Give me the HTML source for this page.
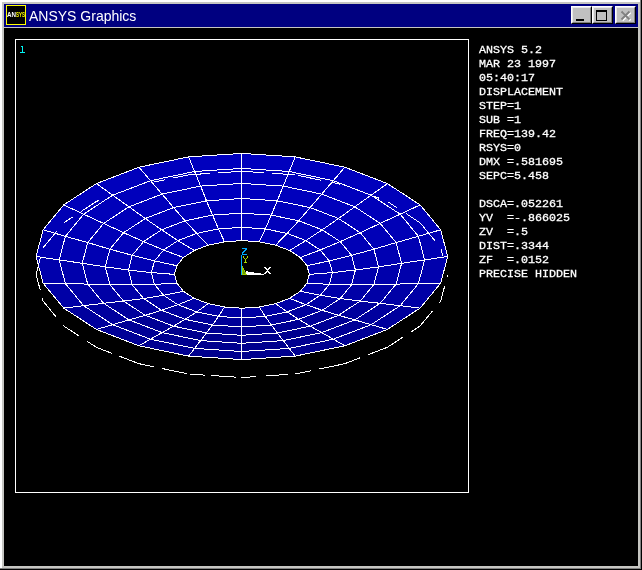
<!DOCTYPE html>
<html><head><meta charset="utf-8"><title>ANSYS Graphics</title>
<style>
html,body{margin:0;padding:0;background:#000;}
body{width:642px;height:570px;position:relative;overflow:hidden;font-family:"Liberation Sans",sans-serif;}
.abs{position:absolute;}
#f0{left:0;top:0;width:642px;height:570px;background:#000;}
#f1{left:0;top:0;width:641px;height:569px;background:#808080;}
#f2{left:0;top:0;width:640px;height:568px;background:#fff;}
#f3{left:2px;top:2px;width:638px;height:566px;background:#c6c6c2;}
#title{left:4px;top:4px;width:634px;height:23px;background:#000080;}
#client{left:4px;top:28px;width:634px;height:538px;background:#000;}
#ttext{transform:translateZ(0);will-change:transform;left:29px;top:5px;height:23px;line-height:23px;color:#fff;font-size:14px;white-space:pre;}
#icon{left:6px;top:5px;width:18px;height:18px;border:1px solid #ff0;background:#000;}
.btn{top:6px;width:21px;height:18px;background:#c0c0c0;box-sizing:border-box;border-top:1px solid #fff;border-left:1px solid #fff;border-right:1px solid #000;border-bottom:1px solid #000;}
.btn i{position:absolute;left:0;top:0;right:0;bottom:0;border-right:1px solid #808080;border-bottom:1px solid #808080;border-left:1px solid #e8e8e8;border-top:1px solid #e8e8e8;}
#plot{left:15px;top:39px;width:452px;height:452px;border:1px solid #fff;}
#info{-webkit-text-stroke:0.3px #fff;transform:translateZ(0);will-change:transform;left:479px;top:43px;color:#fff;font-family:"Liberation Mono",monospace;font-size:11.67px;line-height:14px;white-space:pre;}
#one{left:19px;top:43px;color:#00e0e0;font-family:"Liberation Mono",monospace;font-size:11.67px;line-height:14px;}
</style></head><body>
<div class="abs" id="f0"></div><div class="abs" id="f1"></div><div class="abs" id="f2"></div><div class="abs" id="f3"></div>
<div class="abs" id="title"></div>
<div class="abs" id="client"></div>
<div class="abs" id="icon"></div>
<div class="abs" id="ttext">ANSYS Graphics</div>
<div class="abs btn" style="left:571px"><i></i></div>
<div class="abs btn" style="left:592px"><i></i></div>
<div class="abs btn" style="left:615px"><i></i></div>
<div class="abs" id="plot"></div>
<div class="abs" id="info">ANSYS 5.2
MAR 23 1997
05:40:17
DISPLACEMENT
STEP=1
SUB =1
FREQ=139.42
RSYS=0
DMX =.581695
SEPC=5.458

DSCA=.052261
YV  =-.866025
ZV  =.5
DIST=.3344
ZF  =.0152
PRECISE HIDDEN</div>
<svg width="642" height="570" viewBox="0 0 642 570" shape-rendering="crispEdges" style="position:absolute;left:0;top:0">
<polygon points="309.3,274.4 332.4,272.6 329.3,260.9 307.0,265.7" fill="rgb(0,0,177)" stroke="none"/>
<polygon points="307.0,265.7 329.3,260.9 320.2,250.0 300.3,257.5" fill="rgb(0,0,180)" stroke="none"/>
<polygon points="300.3,257.5 320.2,250.0 305.9,240.6 289.6,250.5" fill="rgb(0,0,182)" stroke="none"/>
<polygon points="289.6,250.5 305.9,240.6 287.1,233.4 275.6,245.2" fill="rgb(0,0,184)" stroke="none"/>
<polygon points="275.6,245.2 287.1,233.4 265.3,228.9 259.3,241.8" fill="rgb(0,0,185)" stroke="none"/>
<polygon points="259.3,241.8 265.3,228.9 241.9,227.3 241.9,240.6" fill="rgb(0,0,185)" stroke="none"/>
<polygon points="241.9,240.6 241.9,227.3 218.5,228.9 224.5,241.8" fill="rgb(0,0,185)" stroke="none"/>
<polygon points="224.5,241.8 218.5,228.9 196.7,233.4 208.2,245.2" fill="rgb(0,0,185)" stroke="none"/>
<polygon points="208.2,245.2 196.7,233.4 177.9,240.6 194.2,250.5" fill="rgb(0,0,184)" stroke="none"/>
<polygon points="194.2,250.5 177.9,240.6 163.6,250.0 183.5,257.5" fill="rgb(0,0,182)" stroke="none"/>
<polygon points="183.5,257.5 163.6,250.0 154.5,260.9 176.8,265.7" fill="rgb(0,0,180)" stroke="none"/>
<polygon points="176.8,265.7 154.5,260.9 151.4,272.6 174.5,274.4" fill="rgb(0,0,177)" stroke="none"/>
<polygon points="174.5,274.4 151.4,272.6 154.5,284.4 176.8,283.1" fill="rgb(0,0,175)" stroke="none"/>
<polygon points="176.8,283.1 154.5,284.4 163.6,295.3 183.5,291.3" fill="rgb(0,0,172)" stroke="none"/>
<polygon points="183.5,291.3 163.6,295.3 177.9,304.7 194.2,298.3" fill="rgb(0,0,169)" stroke="none"/>
<polygon points="194.2,298.3 177.9,304.7 196.7,311.9 208.2,303.6" fill="rgb(0,0,166)" stroke="none"/>
<polygon points="208.2,303.6 196.7,311.9 218.5,316.4 224.5,307.0" fill="rgb(0,0,165)" stroke="none"/>
<polygon points="224.5,307.0 218.5,316.4 241.9,318.0 241.9,308.2" fill="rgb(0,0,163)" stroke="none"/>
<polygon points="241.9,308.2 241.9,318.0 265.3,316.4 259.3,307.0" fill="rgb(0,0,163)" stroke="none"/>
<polygon points="259.3,307.0 265.3,316.4 287.1,311.9 275.6,303.6" fill="rgb(0,0,165)" stroke="none"/>
<polygon points="275.6,303.6 287.1,311.9 305.9,304.7 289.6,298.3" fill="rgb(0,0,166)" stroke="none"/>
<polygon points="289.6,298.3 305.9,304.7 320.2,295.3 300.3,291.3" fill="rgb(0,0,169)" stroke="none"/>
<polygon points="300.3,291.3 320.2,295.3 329.3,284.4 307.0,283.1" fill="rgb(0,0,172)" stroke="none"/>
<polygon points="307.0,283.1 329.3,284.4 332.4,272.6 309.3,274.4" fill="rgb(0,0,175)" stroke="none"/>
<polygon points="332.4,272.6 355.4,270.0 351.6,255.3 329.3,260.9" fill="rgb(0,0,178)" stroke="none"/>
<polygon points="329.3,260.9 351.6,255.3 340.2,241.6 320.2,250.0" fill="rgb(0,0,181)" stroke="none"/>
<polygon points="320.2,250.0 340.2,241.6 322.2,229.8 305.9,240.6" fill="rgb(0,0,184)" stroke="none"/>
<polygon points="305.9,240.6 322.2,229.8 298.7,220.8 287.1,233.4" fill="rgb(0,0,186)" stroke="none"/>
<polygon points="287.1,233.4 298.7,220.8 271.3,215.1 265.3,228.9" fill="rgb(0,0,187)" stroke="none"/>
<polygon points="265.3,228.9 271.3,215.1 241.9,213.2 241.9,227.3" fill="rgb(0,0,187)" stroke="none"/>
<polygon points="241.9,227.3 241.9,213.2 212.5,215.1 218.5,228.9" fill="rgb(0,0,187)" stroke="none"/>
<polygon points="218.5,228.9 212.5,215.1 185.1,220.8 196.7,233.4" fill="rgb(0,0,187)" stroke="none"/>
<polygon points="196.7,233.4 185.1,220.8 161.6,229.8 177.9,240.6" fill="rgb(0,0,186)" stroke="none"/>
<polygon points="177.9,240.6 161.6,229.8 143.6,241.6 163.6,250.0" fill="rgb(0,0,184)" stroke="none"/>
<polygon points="163.6,250.0 143.6,241.6 132.2,255.3 154.5,260.9" fill="rgb(0,0,181)" stroke="none"/>
<polygon points="154.5,260.9 132.2,255.3 128.4,270.0 151.4,272.6" fill="rgb(0,0,178)" stroke="none"/>
<polygon points="151.4,272.6 128.4,270.0 132.2,284.8 154.5,284.4" fill="rgb(0,0,174)" stroke="none"/>
<polygon points="154.5,284.4 132.2,284.8 143.6,298.5 163.6,295.3" fill="rgb(0,0,169)" stroke="none"/>
<polygon points="163.6,295.3 143.6,298.5 161.6,310.3 177.9,304.7" fill="rgb(0,0,164)" stroke="none"/>
<polygon points="177.9,304.7 161.6,310.3 185.1,319.3 196.7,311.9" fill="rgb(0,0,159)" stroke="none"/>
<polygon points="196.7,311.9 185.1,319.3 212.5,325.0 218.5,316.4" fill="rgb(0,0,155)" stroke="none"/>
<polygon points="218.5,316.4 212.5,325.0 241.9,326.9 241.9,318.0" fill="rgb(0,0,153)" stroke="none"/>
<polygon points="241.9,318.0 241.9,326.9 271.3,325.0 265.3,316.4" fill="rgb(0,0,153)" stroke="none"/>
<polygon points="265.3,316.4 271.3,325.0 298.7,319.3 287.1,311.9" fill="rgb(0,0,155)" stroke="none"/>
<polygon points="287.1,311.9 298.7,319.3 322.2,310.3 305.9,304.7" fill="rgb(0,0,159)" stroke="none"/>
<polygon points="305.9,304.7 322.2,310.3 340.2,298.5 320.2,295.3" fill="rgb(0,0,164)" stroke="none"/>
<polygon points="320.2,295.3 340.2,298.5 351.6,284.8 329.3,284.4" fill="rgb(0,0,169)" stroke="none"/>
<polygon points="329.3,284.4 351.6,284.8 355.4,270.0 332.4,272.6" fill="rgb(0,0,174)" stroke="none"/>
<polygon points="355.4,270.0 378.5,266.9 373.9,249.2 351.6,255.3" fill="rgb(0,0,178)" stroke="none"/>
<polygon points="351.6,255.3 373.9,249.2 360.2,232.7 340.2,241.6" fill="rgb(0,0,182)" stroke="none"/>
<polygon points="340.2,241.6 360.2,232.7 338.5,218.5 322.2,229.8" fill="rgb(0,0,185)" stroke="none"/>
<polygon points="322.2,229.8 338.5,218.5 310.2,207.6 298.7,220.8" fill="rgb(0,0,187)" stroke="none"/>
<polygon points="298.7,220.8 310.2,207.6 277.3,200.8 271.3,215.1" fill="rgb(0,0,188)" stroke="none"/>
<polygon points="271.3,215.1 277.3,200.8 241.9,198.5 241.9,213.2" fill="rgb(0,0,189)" stroke="none"/>
<polygon points="241.9,213.2 241.9,198.5 206.5,200.8 212.5,215.1" fill="rgb(0,0,189)" stroke="none"/>
<polygon points="212.5,215.1 206.5,200.8 173.6,207.6 185.1,220.8" fill="rgb(0,0,188)" stroke="none"/>
<polygon points="185.1,220.8 173.6,207.6 145.3,218.5 161.6,229.8" fill="rgb(0,0,187)" stroke="none"/>
<polygon points="161.6,229.8 145.3,218.5 123.6,232.7 143.6,241.6" fill="rgb(0,0,185)" stroke="none"/>
<polygon points="143.6,241.6 123.6,232.7 109.9,249.2 132.2,255.3" fill="rgb(0,0,182)" stroke="none"/>
<polygon points="132.2,255.3 109.9,249.2 105.3,266.9 128.4,270.0" fill="rgb(0,0,178)" stroke="none"/>
<polygon points="128.4,270.0 105.3,266.9 109.9,284.6 132.2,284.8" fill="rgb(0,0,173)" stroke="none"/>
<polygon points="132.2,284.8 109.9,284.6 123.6,301.1 143.6,298.5" fill="rgb(0,0,167)" stroke="none"/>
<polygon points="143.6,298.5 123.6,301.1 145.3,315.3 161.6,310.3" fill="rgb(0,0,160)" stroke="none"/>
<polygon points="161.6,310.3 145.3,315.3 173.6,326.2 185.1,319.3" fill="rgb(0,0,153)" stroke="none"/>
<polygon points="185.1,319.3 173.6,326.2 206.5,333.0 212.5,325.0" fill="rgb(0,0,148)" stroke="none"/>
<polygon points="212.5,325.0 206.5,333.0 241.9,335.3 241.9,326.9" fill="rgb(0,0,146)" stroke="none"/>
<polygon points="241.9,326.9 241.9,335.3 277.3,333.0 271.3,325.0" fill="rgb(0,0,146)" stroke="none"/>
<polygon points="271.3,325.0 277.3,333.0 310.2,326.2 298.7,319.3" fill="rgb(0,0,148)" stroke="none"/>
<polygon points="298.7,319.3 310.2,326.2 338.5,315.3 322.2,310.3" fill="rgb(0,0,153)" stroke="none"/>
<polygon points="322.2,310.3 338.5,315.3 360.2,301.1 340.2,298.5" fill="rgb(0,0,160)" stroke="none"/>
<polygon points="340.2,298.5 360.2,301.1 373.9,284.6 351.6,284.8" fill="rgb(0,0,167)" stroke="none"/>
<polygon points="351.6,284.8 373.9,284.6 378.5,266.9 355.4,270.0" fill="rgb(0,0,173)" stroke="none"/>
<polygon points="378.5,266.9 401.6,263.3 396.1,242.6 373.9,249.2" fill="rgb(0,0,178)" stroke="none"/>
<polygon points="373.9,249.2 396.1,242.6 380.2,223.4 360.2,232.7" fill="rgb(0,0,183)" stroke="none"/>
<polygon points="360.2,232.7 380.2,223.4 354.8,206.8 338.5,218.5" fill="rgb(0,0,186)" stroke="none"/>
<polygon points="338.5,218.5 354.8,206.8 321.7,194.1 310.2,207.6" fill="rgb(0,0,188)" stroke="none"/>
<polygon points="310.2,207.6 321.7,194.1 283.2,186.1 277.3,200.8" fill="rgb(0,0,189)" stroke="none"/>
<polygon points="277.3,200.8 283.2,186.1 241.9,183.4 241.9,198.5" fill="rgb(0,0,190)" stroke="none"/>
<polygon points="241.9,198.5 241.9,183.4 200.6,186.1 206.5,200.8" fill="rgb(0,0,190)" stroke="none"/>
<polygon points="206.5,200.8 200.6,186.1 162.1,194.1 173.6,207.6" fill="rgb(0,0,189)" stroke="none"/>
<polygon points="173.6,207.6 162.1,194.1 129.0,206.8 145.3,218.5" fill="rgb(0,0,188)" stroke="none"/>
<polygon points="145.3,218.5 129.0,206.8 103.6,223.4 123.6,232.7" fill="rgb(0,0,186)" stroke="none"/>
<polygon points="123.6,232.7 103.6,223.4 87.7,242.6 109.9,249.2" fill="rgb(0,0,183)" stroke="none"/>
<polygon points="109.9,249.2 87.7,242.6 82.2,263.3 105.3,266.9" fill="rgb(0,0,178)" stroke="none"/>
<polygon points="105.3,266.9 82.2,263.3 87.7,284.1 109.9,284.6" fill="rgb(0,0,172)" stroke="none"/>
<polygon points="109.9,284.6 87.7,284.1 103.6,303.3 123.6,301.1" fill="rgb(0,0,166)" stroke="none"/>
<polygon points="123.6,301.1 103.6,303.3 129.0,319.9 145.3,315.3" fill="rgb(0,0,157)" stroke="none"/>
<polygon points="145.3,315.3 129.0,319.9 162.1,332.6 173.6,326.2" fill="rgb(0,0,149)" stroke="none"/>
<polygon points="173.6,326.2 162.1,332.6 200.6,340.6 206.5,333.0" fill="rgb(0,0,143)" stroke="none"/>
<polygon points="206.5,333.0 200.6,340.6 241.9,343.3 241.9,335.3" fill="rgb(0,0,141)" stroke="none"/>
<polygon points="241.9,335.3 241.9,343.3 283.2,340.6 277.3,333.0" fill="rgb(0,0,141)" stroke="none"/>
<polygon points="277.3,333.0 283.2,340.6 321.7,332.6 310.2,326.2" fill="rgb(0,0,143)" stroke="none"/>
<polygon points="310.2,326.2 321.7,332.6 354.8,319.9 338.5,315.3" fill="rgb(0,0,149)" stroke="none"/>
<polygon points="338.5,315.3 354.8,319.9 380.2,303.3 360.2,301.1" fill="rgb(0,0,157)" stroke="none"/>
<polygon points="360.2,301.1 380.2,303.3 396.1,284.1 373.9,284.6" fill="rgb(0,0,166)" stroke="none"/>
<polygon points="373.9,284.6 396.1,284.1 401.6,263.3 378.5,266.9" fill="rgb(0,0,172)" stroke="none"/>
<polygon points="401.6,263.3 424.6,259.9 418.4,236.3 396.1,242.6" fill="rgb(0,0,178)" stroke="none"/>
<polygon points="396.1,242.6 418.4,236.3 400.2,214.2 380.2,223.4" fill="rgb(0,0,182)" stroke="none"/>
<polygon points="380.2,223.4 400.2,214.2 371.1,195.2 354.8,206.8" fill="rgb(0,0,186)" stroke="none"/>
<polygon points="354.8,206.8 371.1,195.2 333.3,180.7 321.7,194.1" fill="rgb(0,0,188)" stroke="none"/>
<polygon points="321.7,194.1 333.3,180.7 289.2,171.5 283.2,186.1" fill="rgb(0,0,189)" stroke="none"/>
<polygon points="283.2,186.1 289.2,171.5 241.9,168.4 241.9,183.4" fill="rgb(0,0,189)" stroke="none"/>
<polygon points="241.9,183.4 241.9,168.4 194.6,171.5 200.6,186.1" fill="rgb(0,0,189)" stroke="none"/>
<polygon points="200.6,186.1 194.6,171.5 150.5,180.7 162.1,194.1" fill="rgb(0,0,189)" stroke="none"/>
<polygon points="162.1,194.1 150.5,180.7 112.7,195.2 129.0,206.8" fill="rgb(0,0,188)" stroke="none"/>
<polygon points="129.0,206.8 112.7,195.2 83.6,214.2 103.6,223.4" fill="rgb(0,0,186)" stroke="none"/>
<polygon points="103.6,223.4 83.6,214.2 65.4,236.3 87.7,242.6" fill="rgb(0,0,182)" stroke="none"/>
<polygon points="87.7,242.6 65.4,236.3 59.2,259.9 82.2,263.3" fill="rgb(0,0,178)" stroke="none"/>
<polygon points="82.2,263.3 59.2,259.9 65.4,283.6 87.7,284.1" fill="rgb(0,0,172)" stroke="none"/>
<polygon points="87.7,284.1 65.4,283.6 83.6,305.7 103.6,303.3" fill="rgb(0,0,166)" stroke="none"/>
<polygon points="103.6,303.3 83.6,305.7 112.7,324.7 129.0,319.9" fill="rgb(0,0,158)" stroke="none"/>
<polygon points="129.0,319.9 112.7,324.7 150.5,339.2 162.1,332.6" fill="rgb(0,0,150)" stroke="none"/>
<polygon points="162.1,332.6 150.5,339.2 194.6,348.4 200.6,340.6" fill="rgb(0,0,145)" stroke="none"/>
<polygon points="200.6,340.6 194.6,348.4 241.9,351.5 241.9,343.3" fill="rgb(0,0,142)" stroke="none"/>
<polygon points="241.9,343.3 241.9,351.5 289.2,348.4 283.2,340.6" fill="rgb(0,0,142)" stroke="none"/>
<polygon points="283.2,340.6 289.2,348.4 333.3,339.2 321.7,332.6" fill="rgb(0,0,145)" stroke="none"/>
<polygon points="321.7,332.6 333.3,339.2 371.1,324.7 354.8,319.9" fill="rgb(0,0,150)" stroke="none"/>
<polygon points="354.8,319.9 371.1,324.7 400.2,305.7 380.2,303.3" fill="rgb(0,0,158)" stroke="none"/>
<polygon points="380.2,303.3 400.2,305.7 418.4,283.6 396.1,284.1" fill="rgb(0,0,166)" stroke="none"/>
<polygon points="396.1,284.1 418.4,283.6 424.6,259.9 401.6,263.3" fill="rgb(0,0,172)" stroke="none"/>
<polygon points="424.6,259.9 447.7,256.5 440.7,229.8 418.4,236.3" fill="rgb(0,0,178)" stroke="none"/>
<polygon points="418.4,236.3 440.7,229.8 420.1,204.9 400.2,214.2" fill="rgb(0,0,182)" stroke="none"/>
<polygon points="400.2,214.2 420.1,204.9 387.4,183.6 371.1,195.2" fill="rgb(0,0,186)" stroke="none"/>
<polygon points="371.1,195.2 387.4,183.6 344.8,167.2 333.3,180.7" fill="rgb(0,0,188)" stroke="none"/>
<polygon points="333.3,180.7 344.8,167.2 295.2,156.9 289.2,171.5" fill="rgb(0,0,189)" stroke="none"/>
<polygon points="289.2,171.5 295.2,156.9 241.9,153.4 241.9,168.4" fill="rgb(0,0,190)" stroke="none"/>
<polygon points="241.9,168.4 241.9,153.4 188.6,156.9 194.6,171.5" fill="rgb(0,0,190)" stroke="none"/>
<polygon points="194.6,171.5 188.6,156.9 139.0,167.2 150.5,180.7" fill="rgb(0,0,189)" stroke="none"/>
<polygon points="150.5,180.7 139.0,167.2 96.4,183.6 112.7,195.2" fill="rgb(0,0,188)" stroke="none"/>
<polygon points="112.7,195.2 96.4,183.6 63.7,204.9 83.6,214.2" fill="rgb(0,0,186)" stroke="none"/>
<polygon points="83.6,214.2 63.7,204.9 43.1,229.8 65.4,236.3" fill="rgb(0,0,182)" stroke="none"/>
<polygon points="65.4,236.3 43.1,229.8 36.1,256.5 59.2,259.9" fill="rgb(0,0,178)" stroke="none"/>
<polygon points="59.2,259.9 36.1,256.5 43.1,283.2 65.4,283.6" fill="rgb(0,0,172)" stroke="none"/>
<polygon points="65.4,283.6 43.1,283.2 63.7,308.1 83.6,305.7" fill="rgb(0,0,166)" stroke="none"/>
<polygon points="83.6,305.7 63.7,308.1 96.4,329.4 112.7,324.7" fill="rgb(0,0,157)" stroke="none"/>
<polygon points="112.7,324.7 96.4,329.4 139.0,345.8 150.5,339.2" fill="rgb(0,0,150)" stroke="none"/>
<polygon points="150.5,339.2 139.0,345.8 188.6,356.1 194.6,348.4" fill="rgb(0,0,145)" stroke="none"/>
<polygon points="194.6,348.4 188.6,356.1 241.9,359.6 241.9,351.5" fill="rgb(0,0,142)" stroke="none"/>
<polygon points="241.9,351.5 241.9,359.6 295.2,356.1 289.2,348.4" fill="rgb(0,0,142)" stroke="none"/>
<polygon points="289.2,348.4 295.2,356.1 344.8,345.8 333.3,339.2" fill="rgb(0,0,145)" stroke="none"/>
<polygon points="333.3,339.2 344.8,345.8 387.4,329.4 371.1,324.7" fill="rgb(0,0,150)" stroke="none"/>
<polygon points="371.1,324.7 387.4,329.4 420.1,308.1 400.2,305.7" fill="rgb(0,0,157)" stroke="none"/>
<polygon points="400.2,305.7 420.1,308.1 440.7,283.2 418.4,283.6" fill="rgb(0,0,166)" stroke="none"/>
<polygon points="418.4,283.6 440.7,283.2 447.7,256.5 424.6,259.9" fill="rgb(0,0,172)" stroke="none"/>
<g fill="none" stroke="#fff" stroke-width="1">
<polygon points="309.3,274.4 307.0,265.7 300.3,257.5 289.6,250.5 275.6,245.2 259.3,241.8 241.9,240.6 224.5,241.8 208.2,245.2 194.2,250.5 183.5,257.5 176.8,265.7 174.5,274.4 176.8,283.1 183.5,291.3 194.2,298.3 208.2,303.6 224.5,307.0 241.9,308.2 259.3,307.0 275.6,303.6 289.6,298.3 300.3,291.3 307.0,283.1"/>
<polygon points="332.4,272.6 329.3,260.9 320.2,250.0 305.9,240.6 287.1,233.4 265.3,228.9 241.9,227.3 218.5,228.9 196.7,233.4 177.9,240.6 163.6,250.0 154.5,260.9 151.4,272.6 154.5,284.4 163.6,295.3 177.9,304.7 196.7,311.9 218.5,316.4 241.9,318.0 265.3,316.4 287.1,311.9 305.9,304.7 320.2,295.3 329.3,284.4"/>
<polygon points="355.4,270.0 351.6,255.3 340.2,241.6 322.2,229.8 298.7,220.8 271.3,215.1 241.9,213.2 212.5,215.1 185.1,220.8 161.6,229.8 143.6,241.6 132.2,255.3 128.4,270.0 132.2,284.8 143.6,298.5 161.6,310.3 185.1,319.3 212.5,325.0 241.9,326.9 271.3,325.0 298.7,319.3 322.2,310.3 340.2,298.5 351.6,284.8"/>
<polygon points="378.5,266.9 373.9,249.2 360.2,232.7 338.5,218.5 310.2,207.6 277.3,200.8 241.9,198.5 206.5,200.8 173.6,207.6 145.3,218.5 123.6,232.7 109.9,249.2 105.3,266.9 109.9,284.6 123.6,301.1 145.3,315.3 173.6,326.2 206.5,333.0 241.9,335.3 277.3,333.0 310.2,326.2 338.5,315.3 360.2,301.1 373.9,284.6"/>
<polygon points="401.6,263.3 396.1,242.6 380.2,223.4 354.8,206.8 321.7,194.1 283.2,186.1 241.9,183.4 200.6,186.1 162.1,194.1 129.0,206.8 103.6,223.4 87.7,242.6 82.2,263.3 87.7,284.1 103.6,303.3 129.0,319.9 162.1,332.6 200.6,340.6 241.9,343.3 283.2,340.6 321.7,332.6 354.8,319.9 380.2,303.3 396.1,284.1"/>
<polygon points="424.6,259.9 418.4,236.3 400.2,214.2 371.1,195.2 333.3,180.7 289.2,171.5 241.9,168.4 194.6,171.5 150.5,180.7 112.7,195.2 83.6,214.2 65.4,236.3 59.2,259.9 65.4,283.6 83.6,305.7 112.7,324.7 150.5,339.2 194.6,348.4 241.9,351.5 289.2,348.4 333.3,339.2 371.1,324.7 400.2,305.7 418.4,283.6"/>
<polygon points="447.7,256.5 440.7,229.8 420.1,204.9 387.4,183.6 344.8,167.2 295.2,156.9 241.9,153.4 188.6,156.9 139.0,167.2 96.4,183.6 63.7,204.9 43.1,229.8 36.1,256.5 43.1,283.2 63.7,308.1 96.4,329.4 139.0,345.8 188.6,356.1 241.9,359.6 295.2,356.1 344.8,345.8 387.4,329.4 420.1,308.1 440.7,283.2"/>
<polyline points="309.3,274.4 332.4,272.6 355.4,270.0 378.5,266.9 401.6,263.3 424.6,259.9 447.7,256.5"/>
<polyline points="307.0,265.7 329.3,260.9 351.6,255.3 373.9,249.2 396.1,242.6 418.4,236.3 440.7,229.8"/>
<polyline points="300.3,257.5 320.2,250.0 340.2,241.6 360.2,232.7 380.2,223.4 400.2,214.2 420.1,204.9"/>
<polyline points="289.6,250.5 305.9,240.6 322.2,229.8 338.5,218.5 354.8,206.8 371.1,195.2 387.4,183.6"/>
<polyline points="275.6,245.2 287.1,233.4 298.7,220.8 310.2,207.6 321.7,194.1 333.3,180.7 344.8,167.2"/>
<polyline points="259.3,241.8 265.3,228.9 271.3,215.1 277.3,200.8 283.2,186.1 289.2,171.5 295.2,156.9"/>
<polyline points="241.9,240.6 241.9,227.3 241.9,213.2 241.9,198.5 241.9,183.4 241.9,168.4 241.9,153.4"/>
<polyline points="224.5,241.8 218.5,228.9 212.5,215.1 206.5,200.8 200.6,186.1 194.6,171.5 188.6,156.9"/>
<polyline points="208.2,245.2 196.7,233.4 185.1,220.8 173.6,207.6 162.1,194.1 150.5,180.7 139.0,167.2"/>
<polyline points="194.2,250.5 177.9,240.6 161.6,229.8 145.3,218.5 129.0,206.8 112.7,195.2 96.4,183.6"/>
<polyline points="183.5,257.5 163.6,250.0 143.6,241.6 123.6,232.7 103.6,223.4 83.6,214.2 63.7,204.9"/>
<polyline points="176.8,265.7 154.5,260.9 132.2,255.3 109.9,249.2 87.7,242.6 65.4,236.3 43.1,229.8"/>
<polyline points="174.5,274.4 151.4,272.6 128.4,270.0 105.3,266.9 82.2,263.3 59.2,259.9 36.1,256.5"/>
<polyline points="176.8,283.1 154.5,284.4 132.2,284.8 109.9,284.6 87.7,284.1 65.4,283.6 43.1,283.2"/>
<polyline points="183.5,291.3 163.6,295.3 143.6,298.5 123.6,301.1 103.6,303.3 83.6,305.7 63.7,308.1"/>
<polyline points="194.2,298.3 177.9,304.7 161.6,310.3 145.3,315.3 129.0,319.9 112.7,324.7 96.4,329.4"/>
<polyline points="208.2,303.6 196.7,311.9 185.1,319.3 173.6,326.2 162.1,332.6 150.5,339.2 139.0,345.8"/>
<polyline points="224.5,307.0 218.5,316.4 212.5,325.0 206.5,333.0 200.6,340.6 194.6,348.4 188.6,356.1"/>
<polyline points="241.9,308.2 241.9,318.0 241.9,326.9 241.9,335.3 241.9,343.3 241.9,351.5 241.9,359.6"/>
<polyline points="259.3,307.0 265.3,316.4 271.3,325.0 277.3,333.0 283.2,340.6 289.2,348.4 295.2,356.1"/>
<polyline points="275.6,303.6 287.1,311.9 298.7,319.3 310.2,326.2 321.7,332.6 333.3,339.2 344.8,345.8"/>
<polyline points="289.6,298.3 305.9,304.7 322.2,310.3 338.5,315.3 354.8,319.9 371.1,324.7 387.4,329.4"/>
<polyline points="300.3,291.3 320.2,295.3 340.2,298.5 360.2,301.1 380.2,303.3 400.2,305.7 420.1,308.1"/>
<polyline points="307.0,283.1 329.3,284.4 351.6,284.8 373.9,284.6 396.1,284.1 418.4,283.6 440.7,283.2"/>
</g>
<g fill="none" stroke="#fff" stroke-width="1">
<polyline points="43.3,247.5 56.8,231.1"/>
<polyline points="64.4,222.4 72.5,217.1"/>
<polyline points="81.2,211.4 96.4,201.5 98.6,200.6"/>
<polyline points="153.8,182.0 165.2,179.7"/>
<polyline points="173.4,178.0 188.6,174.8 209.6,173.4"/>
<polyline points="218.5,172.8 241.9,171.3 263.5,172.7"/>
<polyline points="271.8,173.3 295.2,174.8 295.4,174.8"/>
<polyline points="298.0,175.4 321.1,180.2"/>
<polyline points="330.8,182.2 340.4,184.2"/>
<polyline points="372.6,195.8 379.0,198.2"/>
<polyline points="388.4,202.1 396.8,207.6"/>
<polyline points="406.2,213.7 420.1,222.8 435.0,240.8"/>
<polyline points="441.0,248.9 442.9,256.0"/>
<polyline points="447.6,274.7 447.0,277.0"/>
<polyline points="444.7,285.9 440.7,301.1 439.4,302.6"/>
<polyline points="432.3,311.2 420.1,326.0 411.0,332.0"/>
<polyline points="402.7,337.3 387.4,347.3 368.2,354.7"/>
<polyline points="360.4,357.7 344.8,363.7 319.3,369.0"/>
<polyline points="310.7,370.8 295.3,374.0"/>
<polyline points="288.4,374.4 265.7,375.9"/>
<polyline points="256.5,376.6 241.9,377.5 240.6,377.4"/>
<polyline points="236.4,377.2 211.3,375.5"/>
<polyline points="204.7,375.1 189.7,374.1"/>
<polyline points="186.9,373.6 162.0,368.5"/>
<polyline points="153.9,366.8 139.0,363.7 119.4,356.2"/>
<polyline points="111.9,353.3 96.4,347.3 87.3,341.4"/>
<polyline points="79.5,336.3 63.7,326.0 62.7,324.8"/>
<polyline points="55.8,316.5 43.1,301.1 42.2,297.8"/>
<polyline points="40.1,289.7 36.1,274.4 40.7,256.6"/>
</g>
<g>
<polygon points="246,271.2 264,274 264,275 246,275" fill="#fff"/>
<polygon points="242,265 247,275 242,275" fill="#9c0"/>
<polygon points="243,269 245.5,274 243,274" fill="#690"/>
<rect x="241" y="255" width="1" height="20" fill="#0af"/>
<rect x="242" y="248" width="5" height="1" fill="#0af"/><rect x="245" y="249" width="2" height="1" fill="#0af"/><rect x="244" y="250" width="2" height="1" fill="#0af"/><rect x="243" y="251" width="2" height="1" fill="#0af"/><rect x="242" y="252" width="2" height="1" fill="#0af"/><rect x="242" y="253" width="1" height="1" fill="#0af"/><rect x="242" y="254" width="5" height="1" fill="#0af"/>
<rect x="243" y="256" width="1" height="1" fill="#ad0"/><rect x="247" y="256" width="1" height="1" fill="#ad0"/><rect x="243" y="257" width="1" height="1" fill="#ad0"/><rect x="247" y="257" width="1" height="1" fill="#ad0"/><rect x="244" y="258" width="1" height="1" fill="#ad0"/><rect x="246" y="258" width="1" height="1" fill="#ad0"/><rect x="245" y="259" width="1" height="1" fill="#ad0"/><rect x="245" y="260" width="1" height="1" fill="#ad0"/><rect x="245" y="261" width="1" height="1" fill="#ad0"/><rect x="244" y="262" width="3" height="1" fill="#ad0"/>
<rect x="264" y="267" width="2" height="1" fill="#fff"/><rect x="269" y="267" width="2" height="1" fill="#fff"/><rect x="265" y="268" width="2" height="1" fill="#fff"/><rect x="268" y="268" width="2" height="1" fill="#fff"/><rect x="266" y="269" width="3" height="1" fill="#fff"/><rect x="267" y="270" width="1" height="1" fill="#fff"/><rect x="266" y="271" width="3" height="1" fill="#fff"/><rect x="265" y="272" width="2" height="1" fill="#fff"/><rect x="268" y="272" width="2" height="1" fill="#fff"/><rect x="264" y="273" width="2" height="1" fill="#fff"/><rect x="269" y="273" width="2" height="1" fill="#fff"/>
<rect x="21" y="46" width="2" height="1" fill="#00f4f4"/><rect x="22" y="47" width="1" height="1" fill="#00f4f4"/><rect x="22" y="48" width="1" height="1" fill="#00f4f4"/><rect x="22" y="49" width="1" height="1" fill="#00f4f4"/><rect x="22" y="50" width="1" height="1" fill="#00f4f4"/><rect x="22" y="51" width="1" height="1" fill="#00f4f4"/><rect x="20" y="52" width="5" height="1" fill="#00f4f4"/>
</g>
</svg>
<svg width="642" height="570" viewBox="0 0 642 570" shape-rendering="crispEdges" style="position:absolute;left:0;top:0">
<!-- min -->
<rect x="576" y="19" width="8" height="2" fill="#000"/>
<!-- max -->
<rect x="596.5" y="10.5" width="10" height="10" fill="none" stroke="#000"/><rect x="596" y="10" width="11" height="2" fill="#000"/>
<!-- close (disabled) -->
<path d="M621 11 L629 19 M629 11 L621 19" stroke="#fff" stroke-width="2" fill="none" transform="translate(1.5,1.5)" shape-rendering="auto"/>
<path d="M621 11 L629 19 M629 11 L621 19" stroke="#808080" stroke-width="2" fill="none" transform="translate(0.5,0.5)" shape-rendering="auto"/>
<!-- icon text -->
<text x="7" y="17.6" font-family="Liberation Sans" font-size="7.6" dy="-0.8" font-weight="bold" fill="#fff" textLength="9" lengthAdjust="spacingAndGlyphs" shape-rendering="auto">AN</text>
<text x="16" y="17.6" font-family="Liberation Sans" font-size="7.6" dy="-0.8" font-weight="bold" fill="#ff0" textLength="9" lengthAdjust="spacingAndGlyphs" shape-rendering="auto">SYS</text>
</svg>
</body></html>
